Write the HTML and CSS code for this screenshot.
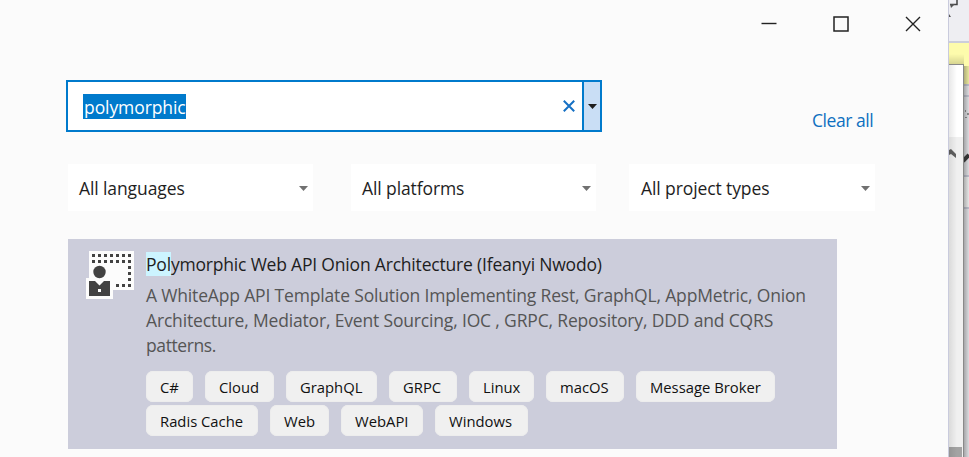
FILE: index.html
```html
<!DOCTYPE html>
<html lang="en">
<head>
<meta charset="utf-8">
<title>Create a new project</title>
<link rel="stylesheet" href="styles.css">
</head>
<body>
<main class="dialog">
  <header class="titlebar">
    <svg width="16" height="16" viewBox="0 0 16 16"><path d="M.5 7.5h15" stroke="#222" stroke-width="1.4"/></svg>
    <svg width="16" height="16" viewBox="0 0 16 16"><rect x="1" y="1" width="14" height="14" fill="none" stroke="#222" stroke-width="1.5"/></svg>
    <svg width="16" height="16" viewBox="0 0 16 16"><path d="M1 1l14 14M15 1L1 15" stroke="#222" stroke-width="1.4"/></svg>
  </header>
  <div class="search-row">
    <div class="search">
      <span class="query">polymorphic</span>
      <svg class="clear" width="12" height="12" viewBox="0 0 12 12"><path d="M.8.8l10.4 10.4M11.2.8L.8 11.2" stroke="#1570c4" stroke-width="2"/></svg>
      <span class="history"><svg width="9" height="5" viewBox="0 0 9 5"><path d="M0 0h9L4.5 5z" fill="#1e1e1e"/></svg></span>
    </div>
    <a class="clear-all">Clear all</a>
  </div>
  <div class="filters">
    <div class="filter"><span class="languages">All languages</span><svg width="9" height="5" viewBox="0 0 9 5"><path d="M0 0h9L4.5 5z" fill="#717171"/></svg></div>
    <div class="filter"><span class="platforms">All platforms</span><svg width="9" height="5" viewBox="0 0 9 5"><path d="M0 0h9L4.5 5z" fill="#717171"/></svg></div>
    <div class="filter"><span class="types">All project types</span><svg width="9" height="5" viewBox="0 0 9 5"><path d="M0 0h9L4.5 5z" fill="#717171"/></svg></div>
  </div>
  <section class="card">
    <svg class="template-icon" width="48" height="48" viewBox="0 0 48 48">
      <path d="M3 0h45v39H27v9H0V27h3z" fill="#fcfcfc"/>
      <path d="M6 4.500h39M6 10.500h39" stroke="#424242" stroke-width="3" stroke-dasharray="3"/>
      <path d="M42 15h3v3h-3zM42 21h3v3h-3zM42 27h3v3h-3zM42 33h3v3h-3zM36 33h3v3h-3zM30 33h3v3h-3z" fill="#424242"/>
      <circle cx="13.5" cy="21" r="6.2" fill="#424242"/>
      <path d="M3 30h6l4.500 4.500L18 30h6v15H3z" fill="#424242"/>
      <path d="M12 38h3v3h-3z" fill="#fcfcfc"/>
    </svg>
    <div class="details">
      <h1 class="name"><mark>Pol</mark>ymorphic Web API Onion Architecture (Ifeanyi Nwodo)</h1>
      <p class="description">
        <span class="line-a">A WhiteApp API Template Solution Implementing Rest, GraphQL, AppMetric, Onion</span>
        <span class="line-b">Architecture, Mediator, Event Sourcing, IOC , GRPC, Repository, DDD and CQRS</span>
        <span class="line-c">patterns.</span>
      </p>
      <div class="tags">
        <span>C#</span><span>Cloud</span><span>GraphQL</span><span>GRPC</span><span>Linux</span><span>macOS</span><span>Message Broker</span><span>Radis Cache</span><span>Web</span><span>WebAPI</span><span>Windows</span>
      </div>
    </div>
  </section>
</main>
<aside class="backdrop">
  <svg width="20" height="457" viewBox="0 0 20 457">
    <defs>
      <linearGradient id="edge"><stop offset="0" stop-color="#000" stop-opacity=".3"/><stop offset="1" stop-color="#000" stop-opacity=".08"/></linearGradient>
      <linearGradient id="top" x2="0" y2="1"><stop offset="0" stop-color="#000" stop-opacity="0"/><stop offset="1" stop-color="#000" stop-opacity=".15"/></linearGradient>
      <linearGradient id="left"><stop offset="0" stop-color="#000" stop-opacity=".09"/><stop offset="1" stop-color="#000" stop-opacity="0"/></linearGradient>
    </defs>
    <path d="M0 0h20v457H0z" fill="#eeeef2"/>
    <path d="M0 43h20v41H0z" fill="#fdfbac"/>
    <path d="M0 41h20v2H0zM0 84h20v2H0zM0 95h20v2H0zM0 175h20v2H0zM0 207h20v2H0z" fill="#cccedb"/>
    <path d="M0 177h20v30H0z" fill="#fafafa"/>
    <path d="M8 0v4.500H1" fill="none" stroke="#424242" stroke-width="1.500"/>
    <path d="M1 4h5L2 8z" fill="#555"/>
    <path d="M0 14l2 3H0z" fill="#555"/>
    <path d="M16 110h1v2h-1zM18 113h2v2h-2zM16 117h2v1h-2z" fill="#999"/>
    <path d="M0 54h15v10H0z" fill="url(#top)"/>
    <path d="M15 66h5v391h-5z" fill="url(#edge)"/>
    <path d="M14 161l6-6" stroke="#333" stroke-width="4"/>
    <path d="M0 64h15v393H0z" fill="#898989"/>
    <path d="M0 65h14v72H0z" fill="#fff"/>
    <path d="M0 137h14v320H0z" fill="#f0f0f0"/>
    <path d="M0 447h13v10H0z" fill="#a3a3a3"/>
    <path d="M0 150l2-1 5 5v4l-5-4-2 1z" fill="#606060"/>
    <path d="M0 65h8v392H0z" fill="url(#left)"/>
  </svg>
</aside>
</body>
</html>
```
FILE: styles.css
```css
* { box-sizing: border-box; }
body {
  margin: 0;
  height: 457px;
  display: flex;
  overflow: hidden;
  background: #fbfbfb;
  color: #1e1e1e;
  font: 17.5px/25px "Open Sans", "Noto Sans", sans-serif;
  white-space: nowrap;
}
svg { display: block; flex: none; }
.dialog { width: 949px; height: 457px; border-right: 1px solid #c9cbdd; }
.backdrop { width: 20px; }
.titlebar { display: flex; justify-content: flex-end; gap: 56px; padding: 16px 27px 0 0; }
.search-row { display: flex; justify-content: space-between; padding: 48px 75px 0 66px; }
.search {
  display: flex;
  align-items: center;
  width: 536px;
  height: 52px;
  border: 2px solid #007acc;
  background: #fff;
}
.query {
  width: 103px;
  height: 25px;
  margin-left: 15px;
  padding-left: 1px;
  background: #007acc;
  color: #fff;
  line-height: 27px;
  letter-spacing: -0.08px;
}
.clear { margin-left: auto; margin-right: 7px; }
.history {
  width: 18px;
  height: 48px;
  border-left: 2px solid #007acc;
  background: #c9def5;
  display: grid;
  place-items: center;
}
.clear-all { width: 61px; margin-top: 28px; color: #0e70c0; letter-spacing: -0.45px; }
.filters { display: flex; padding: 32px 0 0 68px; letter-spacing: -0.1px; }
.filter {
  display: flex;
  align-items: center;
  justify-content: space-between;
  width: 245px;
  height: 47px;
  margin-top: -1px;
  padding: 2px 5px 0 11px;
  background: #fff;
}
.filter:nth-child(2) { margin: -1px 33px 0 38px; }
.filter:nth-child(3) { width: 246px; padding-left: 12px; }
.card {
  display: flex;
  width: 769px;
  height: 210px;
  margin: 28px 0 0 68px;
  padding: 12px 0 0 18px;
  background: #cccddb;
}
.details { margin-left: 12px; }
.name { margin: 1px 0 6px; font-size: 17.5px; font-weight: 400; line-height: 25px; letter-spacing: -0.19px; }
mark { background: #ccf4ff; color: inherit; }
.description { margin: 0; color: #555; letter-spacing: -0.165px; }
.description span { display: block; }
.line-c { letter-spacing: -0.4px; }
.tags {
  display: flex;
  flex-wrap: wrap;
  gap: 3px 12px;
  width: 650px;
  margin-top: 13px;
  font-size: 14.8px;
  line-height: 32px;
  color: #111;
}
.tags span { height: 31px; padding: 0 14px; border-radius: 7px; background: #f0f0f0; box-shadow: inset 0 0 0 1px #ededed; }
.tags span:nth-child(1) { width: 47px; }
.tags span:nth-child(2) { width: 69px; }
.tags span:nth-child(3) { width: 91px; }
.tags span:nth-child(4) { width: 68px; }
.tags span:nth-child(5) { width: 65px; }
.tags span:nth-child(6) { width: 78px; }
.tags span:nth-child(7) { width: 139px; }
.tags span:nth-child(8) { width: 112px; }
.tags span:nth-child(9) { width: 59px; }
.tags span:nth-child(10) { width: 82px; }
.tags span:nth-child(11) { width: 93px; }
```
